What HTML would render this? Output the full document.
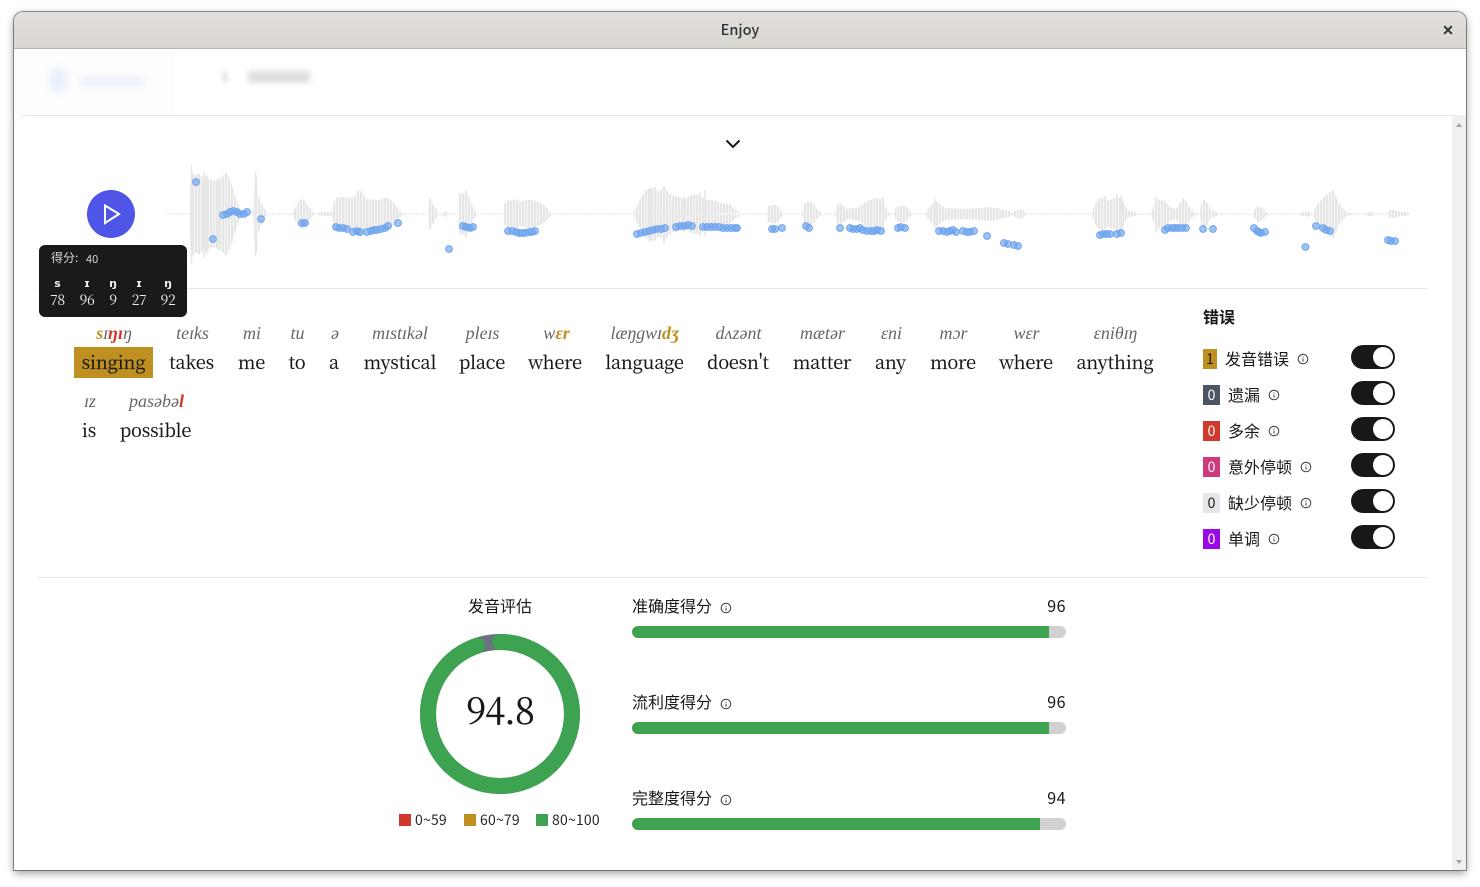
<!DOCTYPE html>
<html lang="zh"><head><meta charset="utf-8"><title>Enjoy</title>
<style>
*{box-sizing:border-box}
html,body{margin:0;padding:0;width:1480px;height:887px;overflow:hidden;background:#fff}
body{position:relative;font-family:"Noto Sans CJK SC","Liberation Sans",sans-serif;color:#18181b}
.a{position:absolute;white-space:nowrap}
#win{position:absolute;left:14px;top:12px;width:1452px;height:858px;border-radius:9px 9px 0 0;box-shadow:0 0 0 1px rgba(70,70,70,.6),0 3px 9px rgba(0,0,0,.4);background:#fff}
#tb{position:absolute;left:14px;top:12px;width:1452px;height:37px;border-radius:9px 9px 0 0;background:linear-gradient(#e3dfdc,#d9d5d1);border-bottom:1px solid #bdb5b0}
#card{position:absolute;left:14px;top:115px;width:1438px;height:755px;background:#fff;border-radius:14px 0 0 0;border-top:1px solid #e4e4e4}
#sb{position:absolute;left:1452px;top:115px;width:14px;height:755px;background:#f0f0f0}
.ipa,.w{position:absolute;transform:translateX(-50%);white-space:nowrap}
.ipa{font:italic 18px "Liberation Serif",serif;color:#666;top:323px;line-height:20px}
.w{font:18px "Noto Serif CJK SC","Liberation Serif",serif;color:#18181b;top:349px;line-height:26px;letter-spacing:-.12px;-webkit-text-stroke:.2px #18181b}
.g{color:#bf901f;font-weight:700}.r{color:#d03a2d;font-weight:700}
.hr{position:absolute;left:38px;width:1389px;height:1px;background:#e5e5e5}
.bd{position:absolute;left:1203px;width:17px;height:20px;text-align:center;font-size:14px;line-height:20px;color:#fff}
.lb{position:absolute;font-size:16px;line-height:22px;white-space:nowrap;color:#18181b}
.tg{position:absolute;left:1351px;width:44px;height:24px;border-radius:12px;background:#18181b}
.tg i{position:absolute;left:22px;top:2px;width:20px;height:20px;border-radius:50%;background:#fff}
.ic{position:absolute;width:12px;height:12px}
.bar{position:absolute;left:632px;width:434px;height:12px;border-radius:6px;background:#d1d1d1;overflow:hidden}
.bar i{display:block;height:12px;background:#3da351}
.val{position:absolute;right:414px;font-size:16px;line-height:22px;letter-spacing:.5px}
.sq{position:absolute;top:814px;width:12px;height:12px}
.lg{position:absolute;top:810px;font-size:14px;line-height:20px;color:#27272a;letter-spacing:.2px}
.tn{position:absolute;text-align:center;top:291px;font:14px/18px 'Noto Serif CJK SC',serif;color:#eee;letter-spacing:-.4px}
.tp{position:absolute;text-align:center;top:277px;font:700 11px/14px 'DejaVu Sans',sans-serif;color:#eee}
</style></head><body>
<div id="win"></div>
<div class="a" style="left:15px;top:49px;width:160px;height:66px;background:#fdfdfd"></div>
<div class="a" style="left:50px;top:68px;width:16px;height:24px;background:#e9eefc;filter:blur(4px);border-radius:6px"></div>
<div class="a" style="left:80px;top:77px;width:64px;height:9px;background:#eef1fc;filter:blur(3px)"></div>
<div class="a" style="left:222px;top:72px;width:6px;height:10px;background:#e6e6e6;filter:blur(2px)"></div>
<div class="a" style="left:248px;top:71px;width:62px;height:12px;background:#dedede;filter:blur(3px)"></div>
<div id="tb"></div>
<div class="a" style="left:640px;width:200px;top:19px;text-align:center;font-size:14.5px;line-height:22px;font-weight:500;color:#2e3436">Enjoy</div>
<svg class="a" style="left:1442px;top:24px" width="12" height="12" viewBox="0 0 12 12"><path d="M2.2 2.2L9.8 9.8M9.8 2.2L2.2 9.8" stroke="#2e3436" stroke-width="2" fill="none"/></svg>
<div id="card"></div>
<div id="sb"></div>
<svg class="a" style="left:1452px;top:115px" width="14" height="755" viewBox="0 0 14 755"><path d="M4 12L7 8L10 12Z" fill="#a3a3a3"/><path d="M4 745L7 749L10 745Z" fill="#a3a3a3"/></svg>
<svg class="a" style="left:725px;top:138px" width="16" height="12" viewBox="0 0 16 12"><path d="M1.5 2.5L8 9L14.5 2.5" stroke="#18181b" stroke-width="2" fill="none"/></svg>

<svg class="a" style="left:0;top:0" width="1480" height="320" viewBox="0 0 1480 320">
<defs>
<pattern id="st" width="3" height="10" patternUnits="userSpaceOnUse"><rect width="3" height="10" fill="#f6f6f6"/><rect width="2" height="10" fill="#e6e6e6"/></pattern>
<path id="wv" d="M190 214L190 198L191 170L195 176L198 173L200 174L203 178L206 176L210 180L214 181L218 179L222 177L226 172L229 177L232 185L236 199L240 209L243 214Z
M253 214L254 190L255 176L257 176L258 195L261 202L265 210L268 214Z
M292 214L295 208L299 200L301 199L304 200L308 206L312 211L315 214L322 212L332 212L334 202L337 197L345 197L350 198L355 196L358 190L362 192L366 199L380 200L386 197L390 199L395 204L400 211L404 214Z
M428 214L429 200L430 197L432 203L436 209L439 214L446 211L449 214Z
M458 214L459 195L460 193L464 194L467 192L470 200L473 208L476 212L478 214Z
M503 214L504 204L507 200L512 201L515 199L520 202L526 200L532 200L538 202L544 205L549 210L552 214Z
M633 214L637 205L641 198L646 190L650 188L655 187L659 192L664 186L668 192L673 196L676 196L680 198L685 199L690 196L695 194L700 195L706 200L712 200L722 203L730 204L736 210L741 213Z
M766 214L768 206L772 205L777 205L781 210L784 214Z
M802 214L804 204L807 202L812 202L816 208L820 212L823 214Z
M835 214L837 205L840 203L845 207L848 209L860 207L864 203L870 200L876 198L882 199L885 206L888 212L892 214Z
M894 214L896 207L900 206L906 206L910 211L913 214Z
M925 214L928 209L932 204L936 201L941 205L945 208L965 209L980 208L990 207L1000 209L1008 211L1012 213L1016 210L1022 209L1026 213L1030 214Z
M1092 214L1094 206L1098 199L1103 198L1108 201L1112 199L1117 197L1122 199L1125 205L1128 211L1134 212L1140 214Z
M1150 214L1153 208L1156 198L1160 200L1165 201L1170 207L1176 209L1180 203L1183 199L1187 202L1190 209L1194 212L1196 214Z
M1200 214L1201 204L1204 199L1208 204L1211 210L1217 212L1220 214Z
M1253 214L1255 209L1258 206L1262 208L1266 212L1270 214Z
M1299 214L1301 212L1305 212L1309 211L1313 214L1316 206L1319 202L1324 197L1328 194L1333 190L1336 196L1339 204L1343 208L1346 212L1356 214Z
M1365 214L1368 212L1372 212L1377 213Z
M1387 214L1389 210L1394 210L1400 212L1406 212L1410 214Z"/>
</defs>
<line x1="167" y1="214" x2="1410" y2="214" stroke="#e2e2e2" stroke-width="1" stroke-dasharray="2 1"/>
<use href="#wv" fill="url(#st)"/>
<use href="#wv" fill="url(#st)" transform="matrix(1 0 0 -1 0 428)"/>
<g stroke="#e6e6e6" stroke-width="1.5">
<path d="M191.5 165V263M204 172V258M207 175V255M218 180V250M255.5 172V256M466 190V238M650 188V242M655 187V240M664 186V244M684 196V232M700 192V236M705 190V236M1333 190V238M1121 196V234M1117 194V234M1105 196V232M1156 197V232M1183 198V232M883 197V232M935 199V229"/>
</g>
<g fill="#6ea3ee" fill-opacity=".65" stroke="#6ba3ee" stroke-width="1">
<circle cx="196" cy="182" r="3.4"/><circle cx="213" cy="239" r="3.4"/><circle cx="223" cy="215" r="3.4"/><circle cx="227" cy="214" r="3.4"/><circle cx="230" cy="212" r="3.4"/><circle cx="233" cy="211" r="3.4"/><circle cx="237" cy="212" r="3.4"/><circle cx="240" cy="214" r="3.4"/><circle cx="244" cy="214" r="3.4"/><circle cx="247" cy="212" r="3.4"/><circle cx="261" cy="219" r="3.4"/><circle cx="302" cy="223" r="3.4"/><circle cx="305" cy="223" r="3.4"/>
<circle cx="336" cy="227" r="3.4"/><circle cx="339" cy="228" r="3.4"/><circle cx="343" cy="228" r="3.4"/><circle cx="347" cy="229" r="3.4"/><circle cx="353" cy="232" r="3.4"/><circle cx="357" cy="231" r="3.4"/><circle cx="360" cy="232" r="3.4"/><circle cx="367" cy="232" r="3.4"/><circle cx="371" cy="231" r="3.4"/><circle cx="374" cy="230" r="3.4"/><circle cx="377" cy="230" r="3.4"/><circle cx="381" cy="229" r="3.4"/><circle cx="385" cy="228" r="3.4"/><circle cx="388" cy="226" r="3.4"/><circle cx="398" cy="223" r="3.4"/>
<circle cx="449" cy="249" r="3.4"/><circle cx="463" cy="226" r="3.4"/><circle cx="466" cy="227" r="3.4"/><circle cx="470" cy="228" r="3.4"/><circle cx="473" cy="227" r="3.4"/>
<circle cx="508" cy="231" r="3.4"/><circle cx="512" cy="231" r="3.4"/><circle cx="516" cy="232" r="3.4"/><circle cx="519" cy="233" r="3.4"/><circle cx="522" cy="233" r="3.4"/><circle cx="525" cy="233" r="3.4"/><circle cx="529" cy="232" r="3.4"/><circle cx="532" cy="232" r="3.4"/><circle cx="535" cy="231" r="3.4"/>
<circle cx="637" cy="234" r="3.4"/><circle cx="641" cy="233" r="3.4"/><circle cx="645" cy="232" r="3.4"/><circle cx="649" cy="231" r="3.4"/><circle cx="653" cy="230" r="3.4"/><circle cx="657" cy="229" r="3.4"/><circle cx="661" cy="229" r="3.4"/><circle cx="665" cy="228" r="3.4"/>
<circle cx="676" cy="227" r="3.4"/><circle cx="680" cy="226" r="3.4"/><circle cx="684" cy="226" r="3.4"/><circle cx="688" cy="225" r="3.4"/><circle cx="692" cy="226" r="3.4"/>
<circle cx="703" cy="227" r="3.4"/><circle cx="707" cy="227" r="3.4"/><circle cx="711" cy="227" r="3.4"/><circle cx="715" cy="227" r="3.4"/><circle cx="719" cy="227" r="3.4"/><circle cx="723" cy="228" r="3.4"/><circle cx="727" cy="228" r="3.4"/><circle cx="731" cy="228" r="3.4"/><circle cx="735" cy="228" r="3.4"/><circle cx="737" cy="228" r="3.4"/>
<circle cx="772" cy="229" r="3.4"/><circle cx="775" cy="229" r="3.4"/><circle cx="782" cy="228" r="3.4"/><circle cx="806" cy="226" r="3.4"/><circle cx="809" cy="228" r="3.4"/>
<circle cx="840" cy="228" r="3.4"/><circle cx="850" cy="228" r="3.4"/><circle cx="853" cy="229" r="3.4"/><circle cx="857" cy="229" r="3.4"/><circle cx="860" cy="228" r="3.4"/><circle cx="863" cy="230" r="3.4"/><circle cx="867" cy="231" r="3.4"/><circle cx="871" cy="231" r="3.4"/><circle cx="874" cy="231" r="3.4"/><circle cx="877" cy="230" r="3.4"/><circle cx="881" cy="231" r="3.4"/>
<circle cx="898" cy="228" r="3.4"/><circle cx="901" cy="227" r="3.4"/><circle cx="905" cy="228" r="3.4"/>
<circle cx="939" cy="231" r="3.4"/><circle cx="943" cy="231" r="3.4"/><circle cx="947" cy="232" r="3.4"/><circle cx="950" cy="231" r="3.4"/><circle cx="953" cy="230" r="3.4"/><circle cx="956" cy="232" r="3.4"/><circle cx="963" cy="231" r="3.4"/><circle cx="967" cy="232" r="3.4"/><circle cx="970" cy="232" r="3.4"/><circle cx="974" cy="231" r="3.4"/>
<circle cx="987" cy="236" r="3.4"/><circle cx="1004" cy="243" r="3.4"/><circle cx="1008" cy="244" r="3.4"/><circle cx="1014" cy="245" r="3.4"/><circle cx="1018" cy="246" r="3.4"/>
<circle cx="1100" cy="235" r="3.4"/><circle cx="1103" cy="234" r="3.4"/><circle cx="1107" cy="234" r="3.4"/><circle cx="1110" cy="234" r="3.4"/><circle cx="1117" cy="234" r="3.4"/><circle cx="1121" cy="233" r="3.4"/>
<circle cx="1165" cy="230" r="3.4"/><circle cx="1168" cy="228" r="3.4"/><circle cx="1172" cy="228" r="3.4"/><circle cx="1175" cy="228" r="3.4"/><circle cx="1178" cy="228" r="3.4"/><circle cx="1182" cy="228" r="3.4"/><circle cx="1186" cy="228" r="3.4"/>
<circle cx="1203" cy="229" r="3.4"/><circle cx="1213" cy="229" r="3.4"/>
<circle cx="1254" cy="228" r="3.4"/><circle cx="1257" cy="231" r="3.4"/><circle cx="1259" cy="232" r="3.4"/><circle cx="1261" cy="233" r="3.4"/><circle cx="1265" cy="232" r="3.4"/>
<circle cx="1305.5" cy="247" r="3.4"/><circle cx="1316" cy="226" r="3.4"/><circle cx="1323" cy="228" r="3.4"/><circle cx="1326" cy="230" r="3.4"/><circle cx="1330" cy="231" r="3.4"/>
<circle cx="1388" cy="240" r="3.4"/><circle cx="1391" cy="241" r="3.4"/><circle cx="1395" cy="241" r="3.4"/>
</g>
</svg>

<div class="hr" style="top:288px"></div>
<div class="hr" style="top:577px"></div>

<svg class="a" style="left:87px;top:190px" width="48" height="48" viewBox="0 0 48 48"><circle cx="24" cy="24" r="24" fill="#4f55e6"/><path d="M18 15.5L32 24L18 33Z" fill="none" stroke="#fff" stroke-width="2"/></svg>

<div class="a" style="left:39px;top:245px;width:148px;height:72px;background:#1a1a1c;border-radius:6px"></div>
<div class="a" style="left:51px;top:249px;font-size:12px;line-height:18px;color:#d8d8d8">得分:</div>
<div class="a" style="left:86px;top:250px;font-size:11px;line-height:18px;color:#d8d8d8">40</div>
<div class="tp" style="left:39px;width:37px">s</div>
<div class="tp" style="left:68px;width:38px">ɪ</div>
<div class="tp" style="left:98px;width:30px">ŋ</div>
<div class="tp" style="left:124px;width:30px">ɪ</div>
<div class="tp" style="left:153px;width:30px">ŋ</div>
<div class="tn" style="left:39px;width:37px">78</div>
<div class="tn" style="left:68px;width:38px">96</div>
<div class="tn" style="left:98px;width:30px">9</div>
<div class="tn" style="left:124px;width:30px">27</div>
<div class="tn" style="left:153px;width:30px">92</div>

<div class="a" style="left:74px;top:347px;width:79px;height:31px;background:#bf901f"></div>
<div class="ipa" style="left:114px"><span class="g">s</span>ɪ<span class="r">ŋɪ</span>ŋ</div><div class="w" style="left:113.5px">singing</div>
<div class="ipa" style="left:192.5px">teɪks</div><div class="w" style="left:191.5px">takes</div>
<div class="ipa" style="left:252px">mi</div><div class="w" style="left:251.5px">me</div>
<div class="ipa" style="left:297.5px">tu</div><div class="w" style="left:297px">to</div>
<div class="ipa" style="left:335px">ə</div><div class="w" style="left:334px">a</div>
<div class="ipa" style="left:400px">mɪstɪkəl</div><div class="w" style="left:400px">mystical</div>
<div class="ipa" style="left:482.5px">pleɪs</div><div class="w" style="left:482px">place</div>
<div class="ipa" style="left:556.5px">w<span class="g">ɛr</span></div><div class="w" style="left:555px">where</div>
<div class="ipa" style="left:645px">læŋgwɪ<span class="g">dʒ</span></div><div class="w" style="left:644.5px">language</div>
<div class="ipa" style="left:738.5px">dʌzənt</div><div class="w" style="left:738px">doesn't</div>
<div class="ipa" style="left:822.5px">mætər</div><div class="w" style="left:822px">matter</div>
<div class="ipa" style="left:891.5px">ɛni</div><div class="w" style="left:890.5px">any</div>
<div class="ipa" style="left:953.5px">mɔr</div><div class="w" style="left:953px">more</div>
<div class="ipa" style="left:1026.5px">wɛr</div><div class="w" style="left:1026px">where</div>
<div class="ipa" style="left:1115.5px">ɛniθɪŋ</div><div class="w" style="left:1115px">anything</div>
<div class="ipa" style="left:90px;top:391px">ɪz</div><div class="w" style="left:89px;top:417px">is</div>
<div class="ipa" style="left:156.5px;top:391px">pasəbə<span class="r">l</span></div><div class="w" style="left:155.5px;top:417px">possible</div>

<div class="a" style="left:1203px;top:304px;font-size:16px;line-height:24px;font-weight:700">错误</div>

<div class="bd" style="top:349px;width:14px;background:#bf901f;color:#18181b">1</div><div class="lb" style="left:1225px;top:347px">发音错误</div>
<svg class="ic" style="left:1297px;top:353px" viewBox="0 0 12 12"><circle cx="6" cy="6" r="4.8" fill="none" stroke="#3f3f46"/><path d="M6 3.6V4.6M6 5.6V8.6" stroke="#3f3f46"/></svg><div class="tg" style="top:345px"><i></i></div>
<div class="bd" style="top:385px;background:#4b5563">0</div><div class="lb" style="left:1228px;top:383px">遗漏</div>
<svg class="ic" style="left:1268px;top:389px" viewBox="0 0 12 12"><circle cx="6" cy="6" r="4.8" fill="none" stroke="#3f3f46"/><path d="M6 3.6V4.6M6 5.6V8.6" stroke="#3f3f46"/></svg><div class="tg" style="top:381px"><i></i></div>
<div class="bd" style="top:421px;background:#d03a2d">0</div><div class="lb" style="left:1228px;top:419px">多余</div>
<svg class="ic" style="left:1268px;top:425px" viewBox="0 0 12 12"><circle cx="6" cy="6" r="4.8" fill="none" stroke="#3f3f46"/><path d="M6 3.6V4.6M6 5.6V8.6" stroke="#3f3f46"/></svg><div class="tg" style="top:417px"><i></i></div>
<div class="bd" style="top:457px;background:#cf3a7b">0</div><div class="lb" style="left:1228px;top:455px">意外停顿</div>
<svg class="ic" style="left:1300px;top:461px" viewBox="0 0 12 12"><circle cx="6" cy="6" r="4.8" fill="none" stroke="#3f3f46"/><path d="M6 3.6V4.6M6 5.6V8.6" stroke="#3f3f46"/></svg><div class="tg" style="top:453px"><i></i></div>
<div class="bd" style="top:493px;background:#e5e7eb;color:#18181b">0</div><div class="lb" style="left:1228px;top:491px">缺少停顿</div>
<svg class="ic" style="left:1300px;top:497px" viewBox="0 0 12 12"><circle cx="6" cy="6" r="4.8" fill="none" stroke="#3f3f46"/><path d="M6 3.6V4.6M6 5.6V8.6" stroke="#3f3f46"/></svg><div class="tg" style="top:489px"><i></i></div>
<div class="bd" style="top:529px;background:#9a0ae6">0</div><div class="lb" style="left:1228px;top:527px">单调</div>
<svg class="ic" style="left:1268px;top:533px" viewBox="0 0 12 12"><circle cx="6" cy="6" r="4.8" fill="none" stroke="#3f3f46"/><path d="M6 3.6V4.6M6 5.6V8.6" stroke="#3f3f46"/></svg><div class="tg" style="top:525px"><i></i></div>

<div class="lb" style="left:400px;width:200px;text-align:center;top:594px">发音评估</div>
<svg class="a" style="left:416px;top:630px" width="168" height="168" viewBox="0 0 168 168"><circle cx="84" cy="84" r="72" fill="none" stroke="#6b7280" stroke-width="16"/><circle cx="84" cy="84" r="72" fill="none" stroke="#3da351" stroke-width="16" stroke-linecap="round" stroke-dasharray="428.9 452.4" transform="rotate(-90 84 84)"/></svg>
<div class="a" style="left:400px;width:200px;top:684px;text-align:center;font:36px/52px 'Noto Serif CJK SC',serif;color:#18181b;letter-spacing:-1px;-webkit-text-stroke:.3px #18181b">94.8</div>
<div class="sq" style="left:399px;background:#d03a2d"></div><div class="lg" style="left:415px">0~59</div>
<div class="sq" style="left:464px;background:#bf901f"></div><div class="lg" style="left:480px">60~79</div>
<div class="sq" style="left:536px;background:#3da351"></div><div class="lg" style="left:552px">80~100</div>

<div class="lb" style="left:632px;top:594px">准确度得分</div>
<svg class="ic" style="left:720px;top:602px" viewBox="0 0 12 12"><circle cx="6" cy="6" r="4.8" fill="none" stroke="#3f3f46"/><path d="M6 3.6V4.6M6 5.6V8.6" stroke="#3f3f46"/></svg>
<div class="val" style="top:594px">96</div>
<div class="bar" style="top:626px"><i style="width:416.5px"></i></div>
<div class="lb" style="left:632px;top:690px">流利度得分</div>
<svg class="ic" style="left:720px;top:698px" viewBox="0 0 12 12"><circle cx="6" cy="6" r="4.8" fill="none" stroke="#3f3f46"/><path d="M6 3.6V4.6M6 5.6V8.6" stroke="#3f3f46"/></svg>
<div class="val" style="top:690px">96</div>
<div class="bar" style="top:722px"><i style="width:416.5px"></i></div>
<div class="lb" style="left:632px;top:786px">完整度得分</div>
<svg class="ic" style="left:720px;top:794px" viewBox="0 0 12 12"><circle cx="6" cy="6" r="4.8" fill="none" stroke="#3f3f46"/><path d="M6 3.6V4.6M6 5.6V8.6" stroke="#3f3f46"/></svg>
<div class="val" style="top:786px">94</div>
<div class="bar" style="top:818px"><i style="width:408px"></i></div>
</body></html>
